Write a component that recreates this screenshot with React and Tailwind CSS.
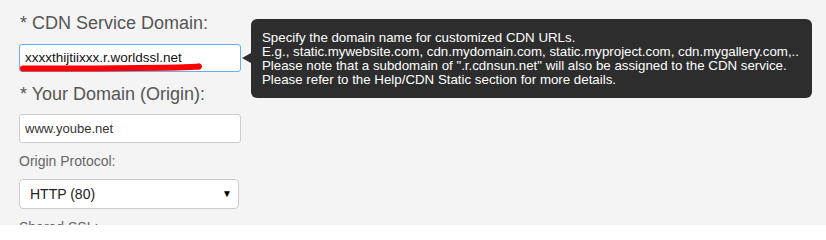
import React from "react";

export default function App() {
  return (
    <div className="relative w-[826px] h-[225px] overflow-hidden bg-[#f4f4f4] font-['Liberation_Sans',Arial,sans-serif]">
      <div className="w-[241px] pl-[19px] pt-[13px] flex flex-col">
        <label className="text-[18px] leading-[20px] text-[#555] pl-px">* CDN Service Domain:</label>
        <div className="relative mt-[11px] h-[28px] w-[222px] rounded-[3px] border border-[#66afe9] bg-white flex items-center px-[5px]">
          <span className="text-[13.5px] text-[#111] leading-none">xxxxthijtiixxx.r.worldssl.net</span>
          <svg className="absolute left-0 top-[17px]" width="190" height="12" viewBox="0 0 190 12">
            <path d="M3 6.5 Q 60 6.8 120 6 T 179 4.5" stroke="#ff0000" strokeWidth="6" strokeLinecap="round" fill="none" />
          </svg>
        </div>
        <label className="mt-[12px] text-[18px] leading-[20px] text-[#555] pl-px">* Your Domain (Origin):</label>
        <div className="mt-[10px] h-[29px] w-[222px] rounded-[3px] border border-[#ccc] bg-white flex items-center px-[5px]">
          <span className="text-[13px] text-[#333] leading-none">www.yoube.net</span>
        </div>
        <label className="mt-[10px] text-[14px] leading-[16px] text-[#666]">Origin Protocol:</label>
        <div className="mt-[10px] h-[30px] w-[220px] rounded-[4px] border border-[#ccc] bg-white flex items-center justify-between pl-[10px] pr-[6px]">
          <span className="text-[14px] text-[#222] leading-none">HTTP (80)</span>
          <span className="text-[10px] text-black leading-none">▼</span>
        </div>
        <label className="mt-[10px] text-[14px] leading-[16px] text-[#666]">Shared SSL:</label>
      </div>

      <div className="absolute left-[251px] top-[19px] w-[561px] rounded-[6px] bg-[#2d2d2d] pl-[11px] pr-[6px] pt-[12px] pb-[11px] text-[13.3px] leading-[14px] text-white">
        <div className="absolute left-[-9px] top-[34px] h-0 w-0 border-y-[5px] border-r-[9px] border-y-transparent border-r-[#2d2d2d]" />
        <p>Specify the domain name for customized CDN URLs.</p>
        <p>E.g., static.mywebsite.com, cdn.mydomain.com, static.myproject.com, cdn.mygallery.com,..</p>
        <p>Please note that a subdomain of ".r.cdnsun.net" will also be assigned to the CDN service.</p>
        <p>Please refer to the Help/CDN Static section for more details.</p>
      </div>
    </div>
  );
}
